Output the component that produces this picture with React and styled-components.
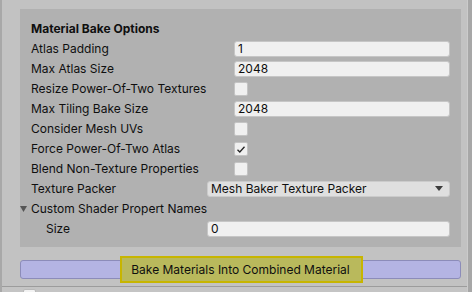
import React from "react";
import styled, { createGlobalStyle } from "styled-components";

const GlobalStyle = createGlobalStyle`
  html, body {
    margin: 0;
    padding: 0;
    background: #c2c2c2;
  }
  body {
    font-family: Inter, "Noto Sans", "Liberation Sans", sans-serif;
    font-size: 12px;
    color: #0f0f0f;
  }
`;

const Window = styled.div`
  display: flex;
  width: 472px;
  height: 292px;
  overflow: hidden;
  background: #c2c2c2;
`;

const LeftEdge = styled.div`
  width: 2px;
  background: #a8a8a8;
`;

const Main = styled.div`
  flex: 1;
  display: flex;
  flex-direction: column;
`;

const ScrollTrack = styled.div`
  width: 4px;
  border-left: 1px solid #cbcbcb;
  background: #a7a7a7;
`;

const Panel = styled.div`
  margin: 9px 6px 0 18px;
  padding: 10px 11px 8px 11px;
  background: #b1b1b1;
  display: flex;
  flex-direction: column;
`;

const Heading = styled.div`
  height: 20px;
  line-height: 20px;
  font-weight: 700;
`;

const Row = styled.div`
  display: grid;
  grid-template-columns: ${(p) => p.$label}px 1fr;
  align-items: center;
  height: 20px;
  padding-left: ${(p) => p.$indent || 0}px;
`;

const Label = styled.span`
  line-height: 20px;
  white-space: nowrap;
`;

const TextField = styled.div`
  height: 14px;
  line-height: 14px;
  padding: 0 3px;
  background: #f0f0f0;
  border: 1px solid #c6c6c6;
  border-radius: 3px;
  margin-top: -1px;
`;

const Check = styled.div`
  width: 12px;
  height: 12px;
  background: #f0f0f0;
  border: 1px solid #c4c4c4;
  border-radius: 2px;
  display: flex;
  align-items: center;
  justify-content: center;
`;

const Dropdown = styled.div`
  display: flex;
  align-items: center;
  justify-content: space-between;
  height: 14px;
  padding: 0 6px 0 3px;
  margin-top: -1px;
  background: #dfdfdf;
  border: 1px solid #cbcbcb;
  border-radius: 3px;
`;

const Foldout = styled.div`
  display: flex;
  align-items: center;
  gap: 4px;
  height: 20px;
  margin-left: -11px;
`;

const ButtonArea = styled.div`
  position: relative;
  margin: 13px 6px 0 18px;
`;

const BakeButton = styled.div`
  position: relative;
  height: 17px;
  line-height: 17px;
  text-align: center;
  background: #b4b4e3;
  border: 1px solid #8c8cb9;
  border-radius: 3px;
`;

const ButtonText = styled.span`
  position: relative;
  z-index: 1;
`;

const Highlight = styled.div`
  position: absolute;
  left: 99px;
  top: -5px;
  width: 239px;
  height: 23px;
  background: #b9b95c;
  border: 2px solid #c7b500;
`;

const Footer = styled.div`
  margin-top: 7px;
  flex: 1;
  border-top: 1px solid #9c9c9c;
  padding: 2px 0 0 21px;
  background: #c4c4c4;
`;

const FooterBox = styled.div`
  width: 11px;
  height: 12px;
  background: #f2f2f2;
  border: 1px solid #b9b9b9;
  border-radius: 2px;
`;

const CheckMark = () => (
  <svg width="10" height="9" viewBox="0 0 10 9">
    <path d="M1.5 4.8 L3.8 7 L8.5 1.8" fill="none" stroke="#222" strokeWidth="1.3" />
  </svg>
);

const DownTri = ({ color = "#3c3c3c", w = 8, h = 5 }) => (
  <svg width={w} height={h} viewBox={`0 0 ${w} ${h}`}>
    <polygon points={`0,0 ${w},0 ${w / 2},${h}`} fill={color} />
  </svg>
);

const fields = [
  { label: "Atlas Padding", type: "text", value: "1" },
  { label: "Max Atlas Size", type: "text", value: "2048" },
  { label: "Resize Power-Of-Two Textures", type: "check" },
  { label: "Max Tiling Bake Size", type: "text", value: "2048" },
  { label: "Consider Mesh UVs", type: "check" },
  { label: "Force Power-Of-Two Atlas", type: "check", checked: true },
  { label: "Blend Non-Texture Properties", type: "check" },
];

export default function App() {
  return (
    <>
      <GlobalStyle />
      <Window>
        <LeftEdge />
        <Main>
          <Panel>
            <Heading>Material Bake Options</Heading>
            {fields.map((f) => (
              <Row key={f.label} $label={203}>
                <Label>{f.label}</Label>
                {f.type === "text" ? (
                  <TextField>{f.value}</TextField>
                ) : (
                  <Check>{f.checked && <CheckMark />}</Check>
                )}
              </Row>
            ))}
            <Row $label={176}>
              <Label>Texture Packer</Label>
              <Dropdown>
                <span>Mesh Baker Texture Packer</span>
                <DownTri />
              </Dropdown>
            </Row>
            <Foldout>
              <DownTri color="#555" w={7} h={6} />
              <Label>Custom Shader Propert Names</Label>
            </Foldout>
            <Row $label={161} $indent={15}>
              <Label>Size</Label>
              <TextField>0</TextField>
            </Row>
          </Panel>
          <ButtonArea>
            <BakeButton>
              <Highlight />
              <ButtonText>Bake Materials Into Combined Material</ButtonText>
            </BakeButton>
          </ButtonArea>
          <Footer>
            <FooterBox />
          </Footer>
        </Main>
        <ScrollTrack />
      </Window>
    </>
  );
}
